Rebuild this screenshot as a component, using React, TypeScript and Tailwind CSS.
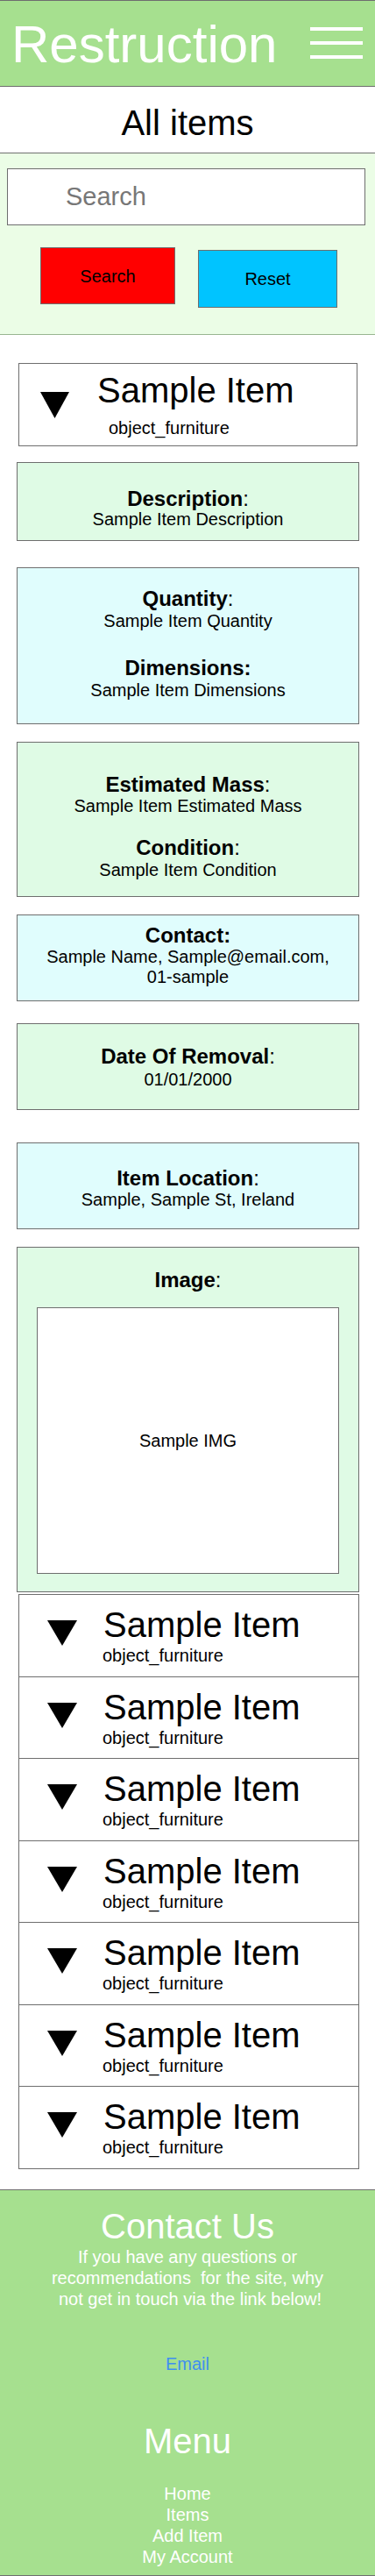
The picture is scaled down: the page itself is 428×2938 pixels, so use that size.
import React from 'react';

const FONT = "font-['Liberation_Sans',Arial,sans-serif]";

function Triangle({ w, h }: { w: number; h: number }) {
    return (
        <svg width={w} height={h} viewBox={`0 0 ${w} ${h}`} className="shrink-0 block">
            <polygon points={`0,0 ${w},0 ${w / 2},${h}`} fill="#000" />
        </svg>
    );
}

function Field({ label, value, boldColon = false, valueClass = 'leading-[23px]' }: { label: string; value: React.ReactNode; boldColon?: boolean; valueClass?: string }) {
    return (
        <div>
            <div className="text-[24px] leading-[27px]">
                <span className="font-bold">{label}</span>
                {boldColon ? <span className="font-bold">:</span> : ':'}
            </div>
            <div className={`text-[20px] ${valueClass}`}>{value}</div>
        </div>
    );
}

const ITEMS = [1, 2, 3, 4, 5, 6, 7];

export default function App() {
    return (
        <div className={`w-[428px] bg-white text-black ${FONT}`}>
            {/* Header */}
            <header className="h-[99px] bg-[#a6e08f] border-t border-b border-[#6e6e6e] flex justify-between">
                <h1 className="pl-[13px] pt-[20px] text-[60px] leading-[60px] text-white">Restruction</h1>
                <button className="mr-[14px] mt-[30px] w-[60px] flex flex-col gap-[12px]">
                    <span className="block h-[4px] bg-white" />
                    <span className="block h-[4px] bg-white" />
                    <span className="block h-[4px] bg-white" />
                </button>
            </header>

            {/* Title */}
            <div className="h-[76px] border-b border-[#707070] pt-[21px] text-center text-[40px] leading-[40px]">All items</div>

            {/* Search */}
            <div className="h-[207px] bg-[#ebfde6] border-b border-[#98b690] pt-[17px]">
                <input
                    type="text"
                    placeholder="Search"
                    className="ml-[8px] w-[409px] h-[65px] bg-white border border-[#6e6e6e] pl-[66px] text-[29px] placeholder:text-[#777] outline-none"
                />
                <div className="flex items-start">
                    <button className="ml-[46px] mt-[25px] w-[154px] h-[65px] bg-[#ff0000] border border-[#6e6e6e] text-[20px]">Search</button>
                    <button className="ml-[26px] mt-[28px] w-[159px] h-[66px] bg-[#00c4ff] border border-[#6e6e6e] text-[20px]">Reset</button>
                </div>
            </div>

            {/* Expanded item */}
            <div className="ml-[21px] mt-[32px] w-[387px] h-[95px] border border-[#6e6e6e] bg-white flex pt-[10px] pl-[24px]">
                <div className="mt-[22px]">
                    <Triangle w={33} h={30} />
                </div>
                <div className="ml-[32px]">
                    <div className="text-[40px] leading-[40px]">Sample Item</div>
                    <div className="mt-[13px] ml-[13px] text-[20px] leading-[20px]">object_furniture</div>
                </div>
            </div>

            <div className="ml-[19px] mt-[18px] w-[391px] h-[90px] border border-[#6e6e6e] bg-[#dffbe5] text-center pt-[27px]">
                <Field label="Description" value="Sample Item Description" valueClass="leading-[20px]" />
            </div>

            <div className="ml-[19px] mt-[30px] w-[391px] h-[179px] border border-[#6e6e6e] bg-[#e0fdfd] text-center pt-[21px] flex flex-col gap-[28px]">
                <Field label="Quantity" value="Sample Item Quantity" valueClass="leading-[23px] mt-[1px]" />
                <Field label="Dimensions" value="Sample Item Dimensions" boldColon valueClass="leading-[23px] mt-[1px]" />
            </div>

            <div className="ml-[19px] mt-[20px] w-[391px] h-[177px] border border-[#6e6e6e] bg-[#dffbe5] text-center pt-[34px] flex flex-col gap-[22px]">
                <Field label="Estimated Mass" value="Sample Item Estimated Mass" />
                <Field label="Condition" value="Sample Item Condition" valueClass="leading-[23px] mt-[1px]" />
            </div>

            <div className="ml-[19px] mt-[20px] w-[391px] h-[99px] border border-[#6e6e6e] bg-[#e0fdfd] text-center pt-[9px]">
                <Field
                    label="Contact"
                    boldColon
                    value={<>Sample Name, Sample@email.com,<br />01-sample</>}
                />
            </div>

            <div className="ml-[19px] mt-[25px] w-[391px] h-[99px] border border-[#6e6e6e] bg-[#dffbe5] text-center pt-[23px]">
                <Field label="Date Of Removal" value="01/01/2000" valueClass="leading-[23px] mt-[2px]" />
            </div>

            <div className="ml-[19px] mt-[37px] w-[391px] h-[99px] border border-[#6e6e6e] bg-[#e0fdfd] text-center pt-[26px]">
                <Field label="Item Location" value="Sample, Sample St, Ireland" />
            </div>

            <div className="ml-[19px] mt-[20px] w-[391px] h-[394px] border border-[#6e6e6e] bg-[#dffbe5] text-center pt-[23px]">
                <div className="text-[24px] leading-[27px]">
                    <span className="font-bold">Image</span>:
                </div>
                <div className="mx-auto mt-[18px] w-[345px] h-[304px] bg-white border border-[#6e6e6e] flex items-center justify-center text-[20px]">
                    Sample IMG
                </div>
            </div>

            {/* Collapsed items */}
            <div className="ml-[21px] mt-[2px] w-[389px] border-t border-l border-r border-[#6e6e6e]">
                {ITEMS.map(i => (
                    <div key={i} className="h-[93.5px] border-b border-[#6e6e6e] flex pl-[32px] pt-[14px]">
                        <div className="mt-[15px]">
                            <Triangle w={34} h={29} />
                        </div>
                        <div className="ml-[29px]">
                            <div className="ml-[1px] text-[40px] leading-[40px]">Sample Item</div>
                            <div className="mt-[5px] text-[20px] leading-[20px]">object_furniture</div>
                        </div>
                    </div>
                ))}
            </div>

            {/* Footer */}
            <footer className="mt-[23.5px] h-[441px] bg-[#a6e08f] border-t border-b border-[#6e6e6e] text-center text-white pt-[19px]">
                <h2 className="text-[40px] leading-[45px]">Contact Us</h2>
                <p className="mx-auto w-[330px] text-[20px] leading-[24px]">
                    If you have any questions or<br />
                    recommendations<span className="inline-block w-[5.5px]" /> for the site, why<br />
                    <span className="pl-[6px]">not get in touch via the link below!</span>
                </p>
                <a href="#" className="block mt-[50px] text-[20px] leading-[24px] text-[#3f8ff0]">Email</a>
                <h2 className="mt-[54px] text-[40px] leading-[45px]">Menu</h2>
                <nav className="mt-[25px] flex flex-col text-[20px] leading-[24px]">
                    <a href="#">Home</a>
                    <a href="#">Items</a>
                    <a href="#">Add Item</a>
                    <a href="#">My Account</a>
                </nav>
            </footer>
        </div>
    );
}
